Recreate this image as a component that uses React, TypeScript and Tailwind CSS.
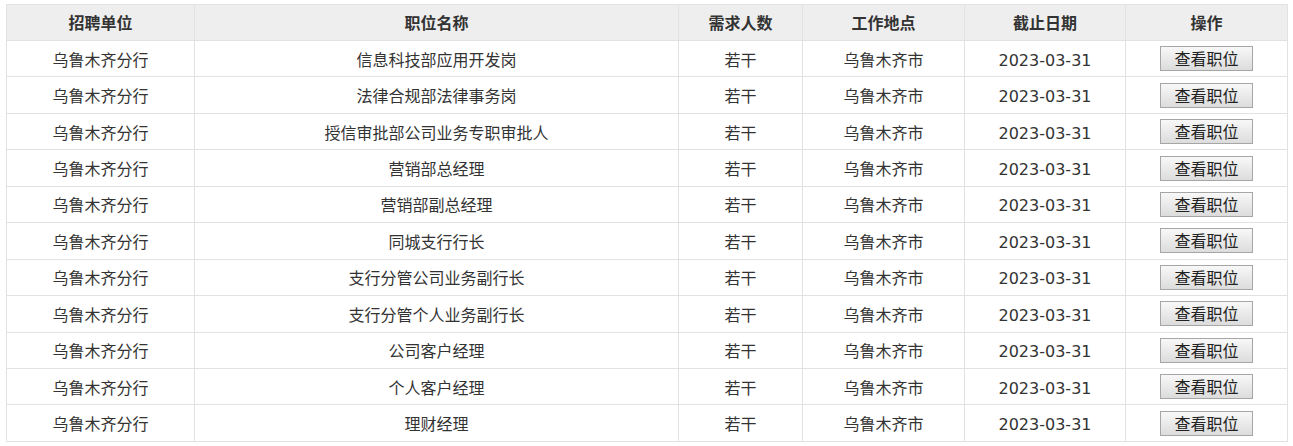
import React from 'react';

const jobs = [
  '信息科技部应用开发岗',
  '法律合规部法律事务岗',
  '授信审批部公司业务专职审批人',
  '营销部总经理',
  '营销部副总经理',
  '同城支行行长',
  '支行分管公司业务副行长',
  '支行分管个人业务副行长',
  '公司客户经理',
  '个人客户经理',
  '理财经理',
];

const cell = 'border border-[#e2e2e2] text-center p-0 pt-[4px]';

const App: React.FC = () => {
  return (
    <div className="w-[1293px] h-[446px] bg-white pt-[4px] pl-[6px] font-['DejaVu_Sans','Noto_Sans_CJK_SC',sans-serif] text-[16px] text-[#333]">
      <table className="w-[1281px] border-collapse table-fixed">
        <colgroup>
          <col className="w-[188px]" />
          <col className="w-[484px]" />
          <col className="w-[124px]" />
          <col className="w-[162px]" />
          <col className="w-[161px]" />
          <col className="w-[162px]" />
        </colgroup>
        <thead>
          <tr className="h-[36px] bg-[#eeeeee]">
            {['招聘单位', '职位名称', '需求人数', '工作地点', '截止日期', '操作'].map((h) => (
              <th key={h} className="border border-[#e2e2e2] font-bold text-center p-0 pt-[2px]">
                {h}
              </th>
            ))}
          </tr>
        </thead>
        <tbody>
          {jobs.map((job) => (
            <tr key={job} className="h-[36.45px]">
              <td className={cell}>乌鲁木齐分行</td>
              <td className={cell}>{job}</td>
              <td className={cell}>若干</td>
              <td className={cell}>乌鲁木齐市</td>
              <td className={cell}>2023-03-31</td>
              <td className="border border-[#e2e2e2] text-center p-0 align-middle">
                <button className="w-[93px] h-[25px] border border-[#a6a6a6] bg-gradient-to-b from-[#f8f8f8] to-[#dcdcdc] text-[16px] leading-[20px] pt-[3px] text-[#222] align-middle">
                  查看职位
                </button>
              </td>
            </tr>
          ))}
        </tbody>
      </table>
    </div>
  );
};

export default App;
